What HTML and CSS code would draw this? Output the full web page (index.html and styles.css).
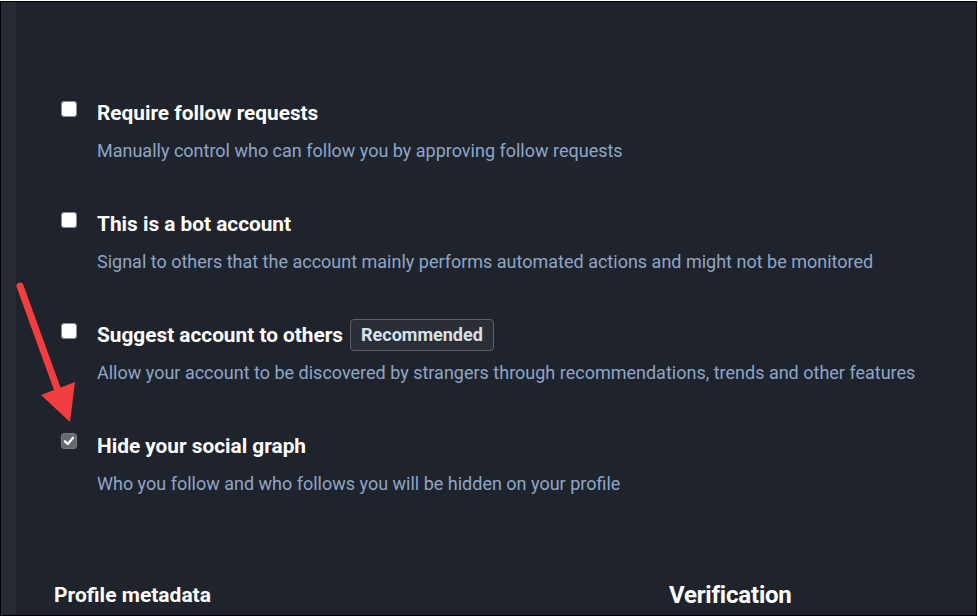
FILE: index.html
```html
<!DOCTYPE html>
<html>
<head>
<meta charset="utf-8">
<link rel="stylesheet" href="styles.css">
</head>
<body>
<div class="frame">
  <aside class="strip"></aside>
  <main class="main">
    <div class="options">
      <div class="option">
        <span class="box"></span>
        <div class="text">
          <div class="title">Require follow requests</div>
          <div class="desc">Manually control who can follow you by approving follow requests</div>
        </div>
      </div>
      <div class="option">
        <span class="box"></span>
        <div class="text">
          <div class="title">This is a bot account</div>
          <div class="desc">Signal to others that the account mainly performs automated actions and might not be monitored</div>
        </div>
      </div>
      <div class="option">
        <span class="box"></span>
        <div class="text">
          <div class="title">Suggest account to others <span class="badge">Recommended</span></div>
          <div class="desc">Allow your account to be discovered by strangers through recommendations, trends and other features</div>
        </div>
      </div>
      <div class="option">
        <span class="box checked"><svg viewBox="0 0 16 16" width="16" height="16"><path d="M4 8.3 L6.8 11 L12 4.8" fill="none" stroke="#fff" stroke-width="2.4" stroke-linecap="round" stroke-linejoin="round"/></svg></span>
        <div class="text">
          <div class="title">Hide your social graph</div>
          <div class="desc">Who you follow and who follows you will be hidden on your profile</div>
        </div>
      </div>
    </div>
    <div class="sections">
      <h2 class="h-meta">Profile metadata</h2>
      <h2 class="h-verif">Verification</h2>
    </div>
  </main>
  <svg class="arrow" width="100" height="440" viewBox="0 0 100 440">
    <line x1="20" y1="285" x2="57" y2="387" stroke="#f23d41" stroke-width="7" stroke-linecap="round"/>
    <polygon points="41,394 75,381 70,421" fill="#f23d41"/>
  </svg>
</div>
</body>
</html>
```
FILE: styles.css
```css
html, body {
  margin: 0;
  padding: 0;
  background: #ffffff;
}
.frame {
  position: relative;
  width: 975px;
  height: 613px;
  margin-top: 1px;
  border: 1px solid #000;
  display: flex;
  overflow: hidden;
  font-family: Roboto, "Liberation Sans", sans-serif;
}
.strip {
  width: 15px;
  background: #282b33;
  flex: none;
}
.main {
  flex: 1;
  background: #1f232b;
  padding: 99px 0 0 45px;
  box-sizing: border-box;
}
.options {
  display: flex;
  flex-direction: column;
  gap: 49px;
}
.option {
  display: flex;
  gap: 20px;
  align-items: flex-start;
}
.box {
  width: 16px;
  height: 16px;
  box-sizing: border-box;
  background: #ffffff;
  border: 1px solid #8b8e95;
  border-radius: 3px;
  flex: none;
  display: flex;
}
.box.checked {
  background: #66696f;
  border-color: #75787e;
  margin-top: -1px;
}
.box.checked svg {
  margin: -1px;
}
.text {
  display: flex;
  flex-direction: column;
  gap: 14px;
}
.title {
  font-size: 20.8px;
  font-weight: 700;
  color: #ffffff;
  line-height: 24px;
  height: 24px;
  display: flex;
  align-items: center;
  gap: 7px;
  white-space: nowrap;
}
.badge {
  font-size: 18px;
  font-weight: 700;
  color: #d9e1e8;
  background: #2a2e36;
  border: 1px solid #5c6069;
  border-radius: 4px;
  height: 32px;
  box-sizing: border-box;
  padding: 0 10px;
  display: inline-flex;
  align-items: center;
  flex: none;
}
.desc {
  font-size: 18px;
  color: #8ea6c8;
  line-height: 24px;
  white-space: nowrap;
}
.sections {
  display: flex;
  margin-top: 86px;
  margin-left: -7px;
  align-items: center;
}
.sections h2 {
  margin: 0;
  color: #ffffff;
  font-weight: 700;
  line-height: 26px;
}
.h-meta {
  font-size: 21px;
  letter-spacing: 0;
  width: 615px;
}
.h-verif {
  font-size: 24px;
  letter-spacing: -0.2px;
}
.arrow {
  position: absolute;
  left: -1px;
  top: -1px;
  pointer-events: none;
}
```
